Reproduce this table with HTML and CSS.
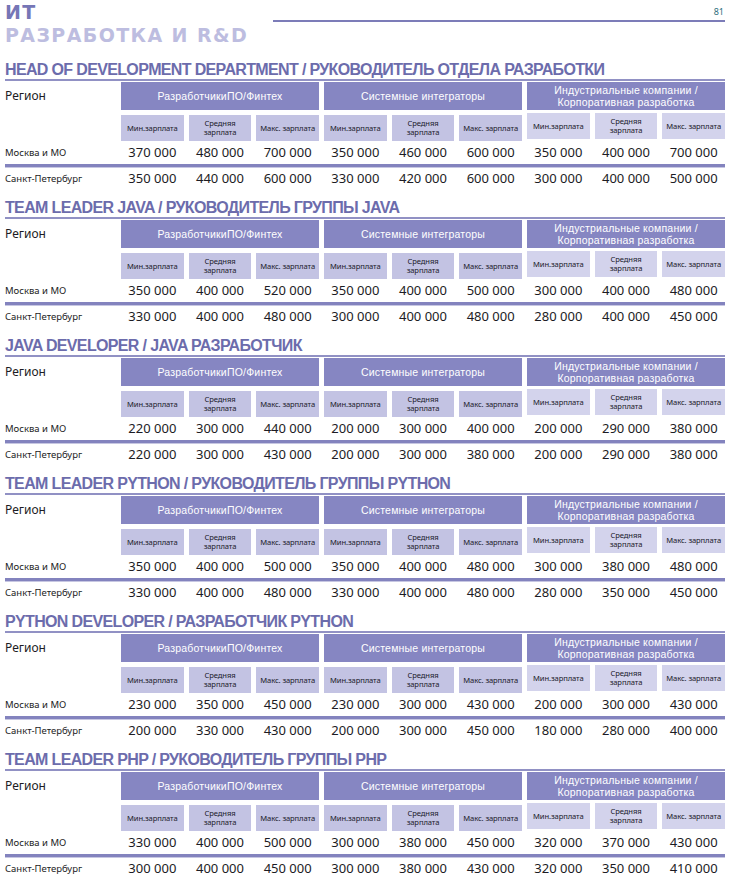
FILE: index.html
```html
<!DOCTYPE html>
<html lang="ru">
<head>
<meta charset="utf-8">
<title>ИТ — Разработка и R&amp;D</title>
<link rel="stylesheet" href="styles.css">
</head>
<body>
<div class="page">
  <header class="top">
    <h1 class="chapter"><span class="ch-dark">ИТ</span><span class="ch-light">РАЗРАБОТКА И R&amp;D</span></h1>
    <div class="top-right"><span class="pnum">81</span></div>
  </header>

  <section class="sec">
    <h2 class="sec-title">HEAD OF DEVELOPMENT DEPARTMENT / РУКОВОДИТЕЛЬ ОТДЕЛА РАЗРАБОТКИ</h2>
    <div class="tbl">
      <div class="region">Регион</div>
      <div class="band">РазработчикиПО/Финтех</div>
      <div class="band">Системные интеграторы</div>
      <div class="band">Индустриальные компании /<br>Корпоративная разработка</div>
      <div class="sub first">Мин.зарплата</div><div class="sub">Средняя<br>зарплата</div><div class="sub">Макс. зарплата</div>
      <div class="sub">Мин.зарплата</div><div class="sub">Средняя<br>зарплата</div><div class="sub">Макс. зарплата</div>
      <div class="sub g3">Мин.зарплата</div><div class="sub g3">Средняя<br>зарплата</div><div class="sub g3">Макс. зарплата</div>
      <div class="city">Москва и МО</div>
      <div class="val">370 000</div><div class="val">480 000</div><div class="val">700 000</div><div class="val">350 000</div><div class="val">460 000</div><div class="val">600 000</div><div class="val">350 000</div><div class="val">400 000</div><div class="val">700 000</div>
      <div class="sep"></div>
      <div class="city">Санкт-Петербург</div>
      <div class="val">350 000</div><div class="val">440 000</div><div class="val">600 000</div><div class="val">330 000</div><div class="val">420 000</div><div class="val">600 000</div><div class="val">300 000</div><div class="val">400 000</div><div class="val">500 000</div>
    </div>
  </section>

  <section class="sec">
    <h2 class="sec-title">TEAM LEADER JAVA / РУКОВОДИТЕЛЬ ГРУППЫ JAVA</h2>
    <div class="tbl">
      <div class="region">Регион</div>
      <div class="band">РазработчикиПО/Финтех</div>
      <div class="band">Системные интеграторы</div>
      <div class="band">Индустриальные компании /<br>Корпоративная разработка</div>
      <div class="sub first">Мин.зарплата</div><div class="sub">Средняя<br>зарплата</div><div class="sub">Макс. зарплата</div>
      <div class="sub">Мин.зарплата</div><div class="sub">Средняя<br>зарплата</div><div class="sub">Макс. зарплата</div>
      <div class="sub g3">Мин.зарплата</div><div class="sub g3">Средняя<br>зарплата</div><div class="sub g3">Макс. зарплата</div>
      <div class="city">Москва и МО</div>
      <div class="val">350 000</div><div class="val">400 000</div><div class="val">520 000</div><div class="val">350 000</div><div class="val">400 000</div><div class="val">500 000</div><div class="val">300 000</div><div class="val">400 000</div><div class="val">480 000</div>
      <div class="sep"></div>
      <div class="city">Санкт-Петербург</div>
      <div class="val">330 000</div><div class="val">400 000</div><div class="val">480 000</div><div class="val">300 000</div><div class="val">400 000</div><div class="val">480 000</div><div class="val">280 000</div><div class="val">400 000</div><div class="val">450 000</div>
    </div>
  </section>

  <section class="sec">
    <h2 class="sec-title">JAVA DEVELOPER / JAVA РАЗРАБОТЧИК</h2>
    <div class="tbl">
      <div class="region">Регион</div>
      <div class="band">РазработчикиПО/Финтех</div>
      <div class="band">Системные интеграторы</div>
      <div class="band">Индустриальные компании /<br>Корпоративная разработка</div>
      <div class="sub first">Мин.зарплата</div><div class="sub">Средняя<br>зарплата</div><div class="sub">Макс. зарплата</div>
      <div class="sub">Мин.зарплата</div><div class="sub">Средняя<br>зарплата</div><div class="sub">Макс. зарплата</div>
      <div class="sub g3">Мин.зарплата</div><div class="sub g3">Средняя<br>зарплата</div><div class="sub g3">Макс. зарплата</div>
      <div class="city">Москва и МО</div>
      <div class="val">220 000</div><div class="val">300 000</div><div class="val">440 000</div><div class="val">200 000</div><div class="val">300 000</div><div class="val">400 000</div><div class="val">200 000</div><div class="val">290 000</div><div class="val">380 000</div>
      <div class="sep"></div>
      <div class="city">Санкт-Петербург</div>
      <div class="val">220 000</div><div class="val">300 000</div><div class="val">430 000</div><div class="val">200 000</div><div class="val">300 000</div><div class="val">380 000</div><div class="val">200 000</div><div class="val">290 000</div><div class="val">380 000</div>
    </div>
  </section>

  <section class="sec">
    <h2 class="sec-title">TEAM LEADER PYTHON / РУКОВОДИТЕЛЬ ГРУППЫ PYTHON</h2>
    <div class="tbl">
      <div class="region">Регион</div>
      <div class="band">РазработчикиПО/Финтех</div>
      <div class="band">Системные интеграторы</div>
      <div class="band">Индустриальные компании /<br>Корпоративная разработка</div>
      <div class="sub first">Мин.зарплата</div><div class="sub">Средняя<br>зарплата</div><div class="sub">Макс. зарплата</div>
      <div class="sub">Мин.зарплата</div><div class="sub">Средняя<br>зарплата</div><div class="sub">Макс. зарплата</div>
      <div class="sub g3">Мин.зарплата</div><div class="sub g3">Средняя<br>зарплата</div><div class="sub g3">Макс. зарплата</div>
      <div class="city">Москва и МО</div>
      <div class="val">350 000</div><div class="val">400 000</div><div class="val">500 000</div><div class="val">350 000</div><div class="val">400 000</div><div class="val">480 000</div><div class="val">300 000</div><div class="val">380 000</div><div class="val">480 000</div>
      <div class="sep"></div>
      <div class="city">Санкт-Петербург</div>
      <div class="val">330 000</div><div class="val">400 000</div><div class="val">480 000</div><div class="val">330 000</div><div class="val">400 000</div><div class="val">480 000</div><div class="val">280 000</div><div class="val">350 000</div><div class="val">450 000</div>
    </div>
  </section>

  <section class="sec">
    <h2 class="sec-title">PYTHON DEVELOPER / РАЗРАБОТЧИК PYTHON</h2>
    <div class="tbl">
      <div class="region">Регион</div>
      <div class="band">РазработчикиПО/Финтех</div>
      <div class="band">Системные интеграторы</div>
      <div class="band">Индустриальные компании /<br>Корпоративная разработка</div>
      <div class="sub first">Мин.зарплата</div><div class="sub">Средняя<br>зарплата</div><div class="sub">Макс. зарплата</div>
      <div class="sub">Мин.зарплата</div><div class="sub">Средняя<br>зарплата</div><div class="sub">Макс. зарплата</div>
      <div class="sub g3">Мин.зарплата</div><div class="sub g3">Средняя<br>зарплата</div><div class="sub g3">Макс. зарплата</div>
      <div class="city">Москва и МО</div>
      <div class="val">230 000</div><div class="val">350 000</div><div class="val">450 000</div><div class="val">230 000</div><div class="val">300 000</div><div class="val">430 000</div><div class="val">200 000</div><div class="val">300 000</div><div class="val">430 000</div>
      <div class="sep"></div>
      <div class="city">Санкт-Петербург</div>
      <div class="val">200 000</div><div class="val">330 000</div><div class="val">430 000</div><div class="val">200 000</div><div class="val">300 000</div><div class="val">450 000</div><div class="val">180 000</div><div class="val">280 000</div><div class="val">400 000</div>
    </div>
  </section>

  <section class="sec">
    <h2 class="sec-title">TEAM LEADER PHP / РУКОВОДИТЕЛЬ ГРУППЫ PHP</h2>
    <div class="tbl">
      <div class="region">Регион</div>
      <div class="band">РазработчикиПО/Финтех</div>
      <div class="band">Системные интеграторы</div>
      <div class="band">Индустриальные компании /<br>Корпоративная разработка</div>
      <div class="sub first">Мин.зарплата</div><div class="sub">Средняя<br>зарплата</div><div class="sub">Макс. зарплата</div>
      <div class="sub">Мин.зарплата</div><div class="sub">Средняя<br>зарплата</div><div class="sub">Макс. зарплата</div>
      <div class="sub g3">Мин.зарплата</div><div class="sub g3">Средняя<br>зарплата</div><div class="sub g3">Макс. зарплата</div>
      <div class="city">Москва и МО</div>
      <div class="val">330 000</div><div class="val">400 000</div><div class="val">500 000</div><div class="val">300 000</div><div class="val">380 000</div><div class="val">450 000</div><div class="val">320 000</div><div class="val">370 000</div><div class="val">430 000</div>
      <div class="sep"></div>
      <div class="city">Санкт-Петербург</div>
      <div class="val">300 000</div><div class="val">400 000</div><div class="val">450 000</div><div class="val">300 000</div><div class="val">380 000</div><div class="val">430 000</div><div class="val">320 000</div><div class="val">350 000</div><div class="val">410 000</div>
    </div>
  </section>
</div>
</body>
</html>
```

FILE: styles.css
```css
* { box-sizing: border-box; }

html, body {
  margin: 0;
  padding: 0;
  background: #ffffff;
}

body {
  font-family: "Noto Sans", "Liberation Sans", sans-serif;
  color: #1c1c24;
}

.page {
  width: 720px;
  margin-left: 5px;
  padding-top: 4px;
}

/* ---------- header ---------- */
.top {
  display: flex;
  align-items: flex-start;
}

.chapter {
  margin: -3px 0 0 0;
  font-family: "DejaVu Sans", "Liberation Sans", sans-serif;
  font-weight: 700;
  font-size: 19px;
  line-height: 23px;
  letter-spacing: 1.4px;
  display: flex;
  flex-direction: column;
}

.ch-dark { color: #7676b6; }
.ch-light { color: #bdbde0; }

.top-right {
  flex: 1;
  margin-left: 25px;
  height: 18px;
  border-bottom: 2px solid #7c7cb8;
  display: flex;
  justify-content: flex-end;
  align-items: flex-start;
}

.pnum {
  font-size: 9px;
  line-height: 12px;
  margin-top: 2px;
  color: #2f6f7c;
  margin-right: 1px;
}

/* ---------- sections ---------- */
.sec {
  margin-top: 13px;
}

.sec + .sec {
  margin-top: 8px;
}

.sec-title {
  margin: 0;
  font-family: "Liberation Sans", Arial, sans-serif;
  font-weight: 700;
  font-size: 16px;
  line-height: 19px;
  letter-spacing: -0.65px;
  color: #6c6cac;
  border-bottom: 2px solid #9191c4;
  white-space: nowrap;
}

.tbl {
  display: grid;
  grid-template-columns: 111px repeat(9, 1fr);
  column-gap: 5px;
  margin-top: 1px;
}

.region {
  grid-column: 1;
  font-size: 12px;
  line-height: 28px;
  color: #1c1c24;
}

.band {
  grid-column: span 3;
  height: 28px;
  background: #8686c2;
  color: #ffffff;
  font-family: "Liberation Sans", Arial, sans-serif;
  font-size: 10.5px;
  line-height: 12.5px;
  letter-spacing: 0.2px;
  display: flex;
  align-items: center;
  justify-content: center;
  text-align: center;
}

.sub {
  margin-top: 5px;
  height: 26px;
  background: #c3c3e3;
  font-size: 7.6px;
  line-height: 9px;
  letter-spacing: -0.1px;
  display: flex;
  align-items: center;
  justify-content: center;
  text-align: center;
  color: #20202a;
  white-space: nowrap;
}

.sub.first { grid-column: 2; }

.sub.g3 {
  background: #d3d3ec;
  margin-top: 3px;
  margin-bottom: 2px;
}

.city {
  grid-column: 1;
  font-size: 9.5px;
  line-height: 23px;
  color: #1c1c24;
}

.val {
  font-size: 13px;
  line-height: 23px;
  text-align: center;
  white-space: nowrap;
  color: #1c1c24;
}

.sep {
  grid-column: 1 / -1;
  height: 3px;
  background: #8383be;
  box-shadow: 0 1px 0 #c7c7e2;
}
```
